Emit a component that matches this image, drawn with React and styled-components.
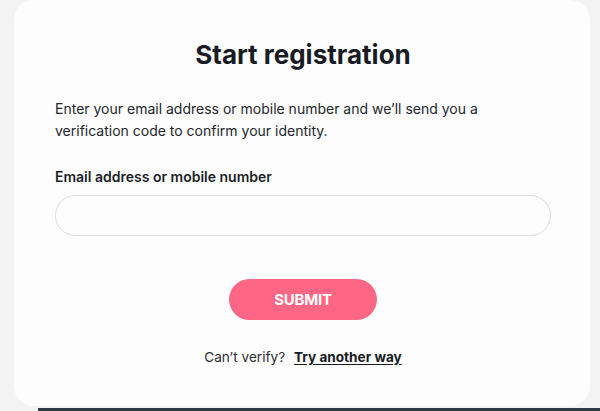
import React from "react"
import styled, { createGlobalStyle } from "styled-components"

const GlobalStyle = createGlobalStyle`
    html, body {
        margin: 0;
        padding: 0;
        background: #f3f3f4;
        font-family: Inter, "Liberation Sans", sans-serif;
        color: #1c1f26;
    }
`

const Page = styled.div`
    width: 600px;
    height: 411px;
    overflow: hidden;
    display: flex;
    flex-direction: column;
`

const Card = styled.main`
    margin: 0 10px 0 14px;
    height: 406px;
    box-sizing: border-box;
    background: #fdfdfd;
    border-radius: 20px;
    padding: 39px 39px 0 41px;
    display: flex;
    flex-direction: column;
`

const Title = styled.h1`
    margin: 0;
    text-align: center;
    font-size: 26px;
    font-weight: 700;
    line-height: 32px;
    color: #181b24;
`

const Intro = styled.p`
    margin: 27px 0 0;
    font-size: 14px;
    line-height: 22px;
    color: #23262d;
`

const Label = styled.label`
    margin-top: 25px;
    font-size: 14px;
    font-weight: 600;
    line-height: 20px;
    color: #1c1f26;
`

const Input = styled.input`
    margin-top: 8px;
    height: 41px;
    width: 100%;
    box-sizing: border-box;
    border: 1px solid #dcdbe0;
    border-radius: 21px;
    background: #fdfdfd;
    padding: 0 18px;
    font: inherit;
    outline: none;
`

const Actions = styled.div`
    display: flex;
    flex-direction: column;
    align-items: center;
`

const SubmitButton = styled.button`
    margin-top: 43px;
    width: 148px;
    height: 41px;
    border: none;
    border-radius: 21px;
    background: #fe6685;
    color: #fff;
    font-family: Inter, "Liberation Sans", sans-serif;
    font-size: 15px;
    font-weight: 700;
    letter-spacing: -0.2px;
`

const Help = styled.p`
    margin: 27px 0 0;
    font-size: 13.6px;
    line-height: 20px;
    color: #2a2d33;

    a {
        margin-left: 5px;
        font-weight: 700;
        color: #181b24;
        text-decoration: underline;
        text-underline-offset: 2px;
    }
`

const FooterBar = styled.div`
    margin: 2px 0 0 38px;
    height: 3px;
    background: #2e3b45;
`

const App = () => {
    return (
        <Page>
            <GlobalStyle />
            <Card>
                <Title>Start registration</Title>
                <Intro>
                    Enter your email address or mobile number and we’ll send you a
                    <br />
                    verification code to confirm your identity.
                </Intro>
                <Label htmlFor="contact">Email address or mobile number</Label>
                <Input id="contact" type="text" />
                <Actions>
                    <SubmitButton type="button">SUBMIT</SubmitButton>
                    <Help>
                        Can’t verify? <a href="#">Try another way</a>
                    </Help>
                </Actions>
            </Card>
            <FooterBar />
        </Page>
    )
}

export default App
